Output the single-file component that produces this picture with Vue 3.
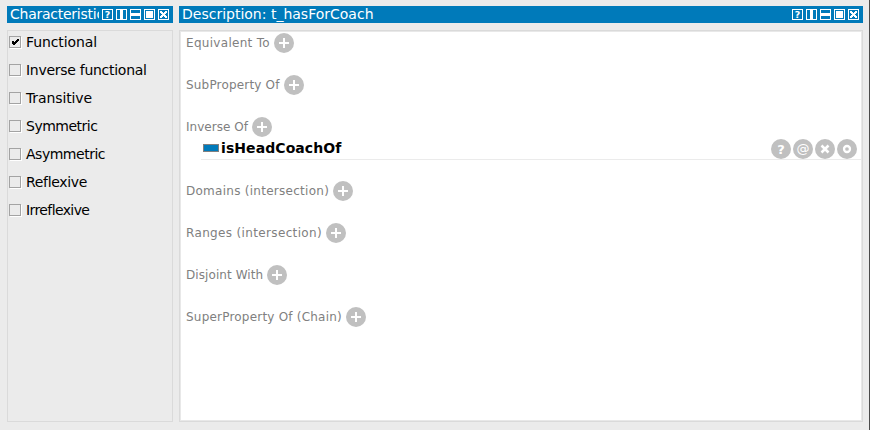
<script setup>
import { h } from 'vue'

const characteristics = [
  { label: 'Functional', checked: true, tracking: -0.1 },
  { label: 'Inverse functional', tracking: -0.28 },
  { label: 'Transitive', tracking: -0.12 },
  { label: 'Symmetric', tracking: -0.5 },
  { label: 'Asymmetric', tracking: -0.48 },
  { label: 'Reflexive', tracking: -0.33 },
  { label: 'Irreflexive', tracking: -0.6 }
]

const sections = [
  { label: 'Equivalent To', width: 84, tracking: 0.3 },
  { label: 'SubProperty Of', width: 94, tracking: 0.18 },
  { label: 'Inverse Of', width: 62, tracking: 0.04 },
  { label: 'Domains (intersection)', width: 143, tracking: 0.27 },
  { label: 'Ranges (intersection)', width: 136, tracking: 0.35 },
  { label: 'Disjoint With', width: 77, tracking: 0.08 },
  { label: 'SuperProperty Of (Chain)', width: 156, tracking: 0.21 }
]
sections[2].item = 'isHeadCoachOf'

const shapes = {
  columns: 'M4 1h3v9h-3z',
  rows: 'M1 4h9v3h-9z',
  max: 'M2 2h7v7h-7z',
  close: 'M2 2h2v1h1v1h1v-1h1v-1h2v2h-1v1h-1v1h1v1h1v2h-2v-1h-1v-1h-1v1h-1v1h-2v-2h1v-1h1v-1h-1v-1h-1z'
}

const WindowIcons = () =>
  h('div', { class: 'window-icons' }, ['help', ...Object.keys(shapes)].map(name =>
    h('svg', { key: name, width: 11, height: 11, viewBox: '0 0 11 11' }, [
      h('rect', { x: 0.5, y: 0.5, width: 10, height: 10, fill: 'none', stroke: '#fff' }),
      name === 'help'
        ? h('text', { x: 5.5, y: 9, 'text-anchor': 'middle', fill: '#fff', 'font-size': 9.5, 'font-weight': 700 }, '?')
        : h('path', { d: shapes[name], fill: '#fff' })
    ])
  ))
</script>

<template>
  <main class="workspace">
    <section class="panel characteristics">
      <header class="title-bar">
        <span class="title">Characteristic</span>
        <WindowIcons />
      </header>
      <div class="panel-body options">
        <div v-for="item in characteristics" :key="item.label" class="option">
          <span class="checkbox">
            <svg v-if="item.checked" width="10" height="10" viewBox="0 0 10 10" shape-rendering="crispEdges">
              <path d="M2 4h2v1h1v-1h1v-1h1v-1h2v2h-1v1h-1v1h-1v1h-1v1h-2v-1h-1z" />
            </svg>
          </span>
          <span class="option-label" :style="{ letterSpacing: item.tracking + 'px' }">{{ item.label }}</span>
        </div>
      </div>
    </section>

    <section class="panel description">
      <header class="title-bar">
        <span class="title">Description: t_hasForCoach</span>
        <WindowIcons />
      </header>
      <div class="panel-body axioms">
        <div v-for="section in sections" :key="section.label" class="section" :class="{ filled: section.item }">
          <div class="section-heading">
            <span class="section-label" :style="{ width: section.width + 'px', letterSpacing: section.tracking + 'px' }">{{ section.label }}</span>
            <svg class="add" width="20" height="20" viewBox="0 0 20 20">
              <circle cx="10" cy="10" r="10" fill="#c0c0c0" />
              <path d="M5 10h10M10 5v10" stroke="#fff" stroke-width="2" />
            </svg>
          </div>
          <div v-if="section.item" class="axiom">
            <span class="property-icon"></span>
            <strong>{{ section.item }}</strong>
            <div class="axiom-actions">
              <svg width="20" height="20"><circle cx="10" cy="10" r="10" /><text x="10" y="15" font-size="13" font-weight="700">?</text></svg>
              <svg width="20" height="20"><circle cx="10" cy="10" r="10" /><text x="10" y="13.5" font-size="13">@</text></svg>
              <svg width="20" height="20"><circle cx="10" cy="10" r="10" /><path d="M6.5 6.5l7 7M13.5 6.5l-7 7" stroke-width="2.5" /></svg>
              <svg width="20" height="20"><circle cx="10" cy="10" r="10" /><circle class="ring" cx="10" cy="10" r="3" stroke-width="2.3" /></svg>
            </div>
          </div>
        </div>
      </div>
    </section>
  </main>
</template>

<style>
body {
  background: #ebebeb;
}
</style>

<style scoped>
.workspace {
  box-sizing: border-box;
  width: 870px;
  height: 430px;
  display: flex;
  gap: 6px;
  padding: 6px 6px 8px 7px;
  border-right: 1px solid #4b4b4b;
  background: #ebebeb;
  font-family: "DejaVu Sans", sans-serif;
  overflow: hidden;
}
.panel {
  display: flex;
  flex-direction: column;
  gap: 7px;
}
.characteristics {
  width: 166px;
}
.description {
  width: 684px;
}
.title-bar {
  box-sizing: border-box;
  height: 17px;
  display: flex;
  align-items: center;
  padding: 0 4px 0 3px;
  background: #007aba;
  color: #fff;
}
.title {
  flex: 1;
  min-width: 0;
  overflow: hidden;
  white-space: nowrap;
  font-size: 14px;
  line-height: 17px;
}
.characteristics .title {
  letter-spacing: -0.25px;
}
:deep(.window-icons) {
  display: flex;
  gap: 3px;
  padding-left: 3px;
}
.panel-body {
  box-sizing: border-box;
  height: 392px;
  border: 1px solid #dadada;
}
.options {
  padding-top: 5px;
}
.option {
  height: 12px;
  margin-bottom: 16px;
  display: flex;
  align-items: center;
  gap: 5px;
  padding-left: 1px;
  font-size: 14px;
  white-space: nowrap;
}
.checkbox {
  box-sizing: border-box;
  width: 12px;
  height: 12px;
  display: flex;
  border: 1px solid #a3a3a3;
  box-shadow: 1px 1px #fff;
}
.option-label {
  line-height: 16px;
}
.axioms {
  box-shadow: inset 0 0 0 1px #e8e8e8;
  background: #fff;
  padding: 2px 1px 0 6px;
}
.section {
  margin-bottom: 22px;
}
.section.filled {
  margin-bottom: 21px;
}
.section-heading {
  height: 20px;
  display: flex;
  align-items: center;
  gap: 4px;
}
.section-label {
  color: #808080;
  font-size: 12px;
  line-height: 16px;
  white-space: nowrap;
}
.add {
  flex: none;
}
.axiom {
  box-sizing: border-box;
  height: 23px;
  display: flex;
  align-items: center;
  margin-left: 15px;
  padding: 0 4px 0 2px;
  border-bottom: 1px solid #ebebeb;
  font-size: 14px;
  line-height: 20px;
  letter-spacing: 0.08px;
}
.property-icon {
  box-sizing: border-box;
  width: 16px;
  height: 8px;
  margin-right: 2px;
  border: 1px solid #808080;
  background: #007aba;
}
.axiom-actions {
  display: flex;
  gap: 2px;
  margin-left: auto;
  padding-top: 2px;
}
.axiom-actions circle {
  fill: #c0c0c0;
}
.axiom-actions text {
  fill: #fff;
  text-anchor: middle;
}
.axiom-actions path,
.axiom-actions .ring {
  fill: none;
  stroke: #fff;
}
</style>
